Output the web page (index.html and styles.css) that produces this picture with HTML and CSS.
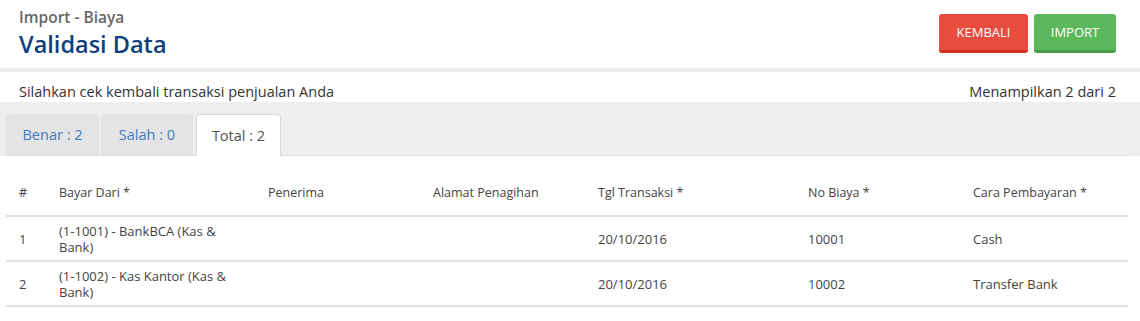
FILE: index.html
```html
<!DOCTYPE html>
<html lang="en">
<head>
    <meta charset="UTF-8">
    <meta name="viewport" content="width=device-width, initial-scale=1.0">
    <title>Import - Biaya</title>
    <link rel="stylesheet" href="styles.css">
</head>
<body>
    <div class="page-header">
        <div class="titles">
            <div class="subtitle">Import - Biaya</div>
            <h1>Validasi Data</h1>
        </div>
        <div class="actions">
            <button class="btn btn-red">KEMBALI</button>
            <button class="btn btn-green">IMPORT</button>
        </div>
    </div>

    <div class="content">
        <div class="info-row">
            <span>Silahkan cek kembali transaksi penjualan Anda</span>
            <span>Menampilkan 2 dari 2</span>
        </div>

        <div class="tab-band">
            <ul class="tabs">
                <li class="tab tab-link">Benar : 2</li>
                <li class="tab tab-link">Salah : 0</li>
                <li class="tab active">Total : 2</li>
            </ul>
        </div>

        <div class="table-wrap">
            <table class="data-table">
                <colgroup>
                    <col style="width: 40px">
                    <col style="width: 209px">
                    <col style="width: 165px">
                    <col style="width: 165px">
                    <col style="width: 210px">
                    <col style="width: 165px">
                    <col>
                </colgroup>
                <thead>
                    <tr>
                        <th>#</th>
                        <th>Bayar Dari *</th>
                        <th>Penerima</th>
                        <th>Alamat Penagihan</th>
                        <th>Tgl Transaksi *</th>
                        <th>No Biaya *</th>
                        <th>Cara Pembayaran *</th>
                    </tr>
                </thead>
                <tbody>
                    <tr>
                        <td>1</td>
                        <td>(1-1001) - BankBCA (Kas &amp; Bank)</td>
                        <td></td>
                        <td></td>
                        <td>20/10/2016</td>
                        <td>10001</td>
                        <td>Cash</td>
                    </tr>
                    <tr>
                        <td>2</td>
                        <td>(1-1002) - Kas Kantor (Kas &amp; Bank)</td>
                        <td></td>
                        <td></td>
                        <td>20/10/2016</td>
                        <td>10002</td>
                        <td>Transfer Bank</td>
                    </tr>
                </tbody>
            </table>
        </div>
    </div>
</body>
</html>
```

FILE: styles.css
```css
* {
    margin: 0;
    padding: 0;
    box-sizing: border-box;
}

body {
    font-family: "Open Sans", Lato, sans-serif;
    font-size: 13px;
    color: #444;
    background: #eceeef;
}

.page-header {
    display: flex;
    justify-content: space-between;
    align-items: flex-start;
    height: 68px;
    padding: 7px 24px 0 19px;
    background: white;
    margin-bottom: 4px;
}

.subtitle {
    font-size: 15.5px;
    line-height: 21px;
    color: #666;
    font-weight: 600;
}

h1 {
    font-size: 23.5px;
    line-height: 32px;
    font-weight: 600;
    color: #0e3f7e;
}

.actions {
    display: flex;
    gap: 6px;
    padding-top: 7px;
}

.btn {
    height: 39px;
    border: none;
    border-radius: 3px;
    color: white;
    font-family: inherit;
    font-size: 13px;
    cursor: pointer;
}

.btn-red {
    width: 89px;
    background: #e74c3c;
    border-bottom: 3px solid #d32f1f;
}

.btn-green {
    width: 82px;
    background: #5cb85c;
    border-bottom: 3px solid #449d44;
}

.content {
    background: white;
}

.info-row {
    display: flex;
    justify-content: space-between;
    height: 30px;
    padding: 11px 24px 0 19px;
    font-size: 14.5px;
    line-height: 17px;
    color: #333;
}

.tab-band {
    background: #eceeef;
    padding: 12px 12px 0 6px;
}

.tabs {
    list-style: none;
    display: flex;
    gap: 2px;
    border-bottom: 1px solid #dcdcdc;
}

.tab {
    height: 41px;
    line-height: 41px;
    font-size: 14.5px;
    text-align: center;
    white-space: nowrap;
    border-radius: 4px 4px 0 0;
}

.tab-link {
    background: #e4e4e4;
    color: #3f7cc0;
}

.tab-link:first-child {
    width: 93px;
}

.tab-link:nth-child(2) {
    width: 92px;
    margin-right: 1px;
}

.tab.active {
    background: white;
    color: #555;
    border: 1px solid #dcdcdc;
    border-bottom: none;
    width: 85px;
    height: 42px;
    margin-bottom: -1px;
}

.table-wrap {
    padding: 0 12px 16px 6px;
}

.data-table {
    width: 100%;
    border-collapse: collapse;
    table-layout: fixed;
}

.data-table th {
    text-align: left;
    font-weight: 500;
    font-size: 12.5px;
    color: #444;
    padding: 29px 13px 14px;
    line-height: 16px;
    border-bottom: 2px solid #e3e3e3;
}

.data-table td {
    padding: 6px 13px 5px;
    line-height: 16px;
    font-size: 13px;
    color: #444;
    border-bottom: 2px solid #e3e3e3;
    height: 45px;
}
```
